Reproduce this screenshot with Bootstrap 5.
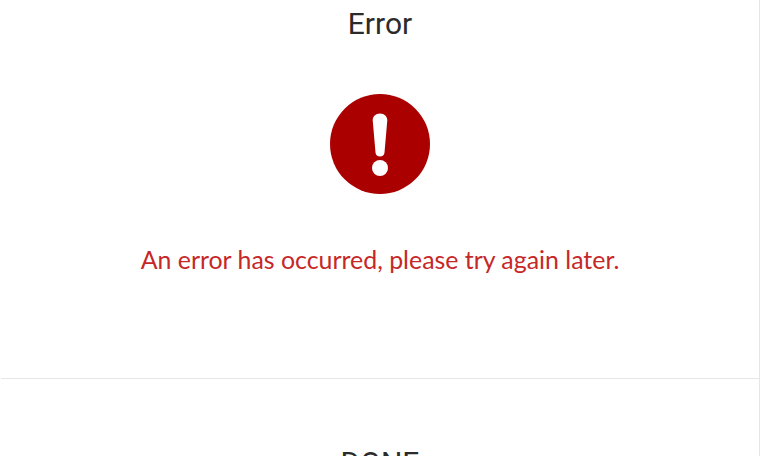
<!DOCTYPE html>
<html lang="en">
<head>
<meta charset="utf-8">
<title>Error</title>
<link href="https://cdn.jsdelivr.net/npm/bootstrap@5.3.0/dist/css/bootstrap.min.css" rel="stylesheet">
<style>
html, body { height: 456px; overflow: hidden; background: #fff; }
.err-panel { width: 760px; height: 456px; overflow: hidden; border-right: 1px solid #e6e6e6; padding-left: 1px; }
.err-title { font-family: Roboto, sans-serif; font-size: 30px; line-height: 34px; color: #2b2b2b; margin: 7px 0 0; font-weight: 400; }
.err-icon { width: 100px; height: 100px; margin-top: 53px; display: block; }
.err-msg { font-family: Lato, sans-serif; font-size: 24.900px; line-height: 32px; color: #c62828; margin: 49px 0 0; }
.err-foot { border-top: 1px solid #e6e6e6; margin-top: 103px; padding-top: 67px; }
.err-done { font-family: Roboto, sans-serif; font-size: 30px; line-height: 34px; color: #2b2b2b; background: none; border: 0; padding: 0; }
</style>
</head>
<body>
<main class="err-panel d-flex flex-column">
  <h1 class="err-title text-center">Error</h1>
  <div class="d-flex justify-content-center">
    <svg class="err-icon" viewBox="0 0 100 100" aria-hidden="true">
      <circle cx="50" cy="50" r="50" fill="#ab0000"/>
      <path d="M50 19.500c4.400 0 7.400 3 7.300 6.800L54.500 58.500c-.2 2.500-2.100 4-4.500 4s-4.300-1.500-4.500-4L42.700 26.300C42.600 22.500 45.600 19.500 50 19.500z" fill="#fff"/>
      <circle cx="50" cy="74" r="8" fill="#fff"/>
    </svg>
  </div>
  <p class="err-msg text-center">An error has occurred, please try again later.</p>
  <div class="err-foot text-center">
    <button type="button" class="err-done">DONE</button>
  </div>
</main>
<script src="https://cdn.jsdelivr.net/npm/bootstrap@5.3.0/dist/js/bootstrap.bundle.min.js"></script>
</body>
</html>
